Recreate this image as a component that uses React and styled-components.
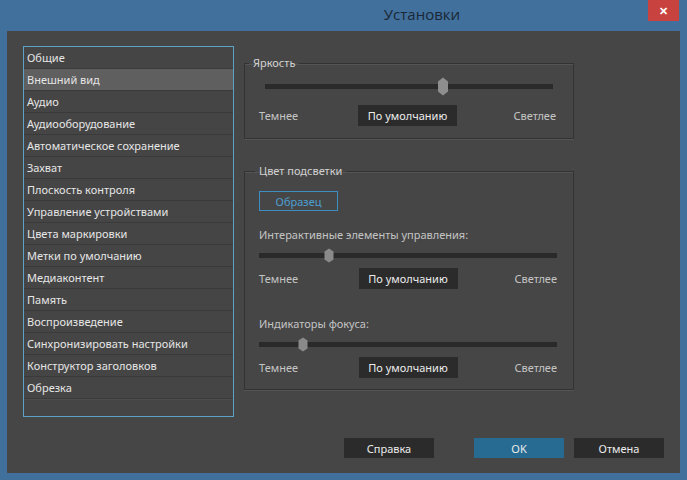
import React from 'react';
import styled, { createGlobalStyle } from 'styled-components';

const GlobalStyle = createGlobalStyle`
  html, body {
    margin: 0;
    padding: 0;
    background: #41709c;
  }
  body {
    font-family: "Noto Sans", "Open Sans", sans-serif;
    font-size: 11px;
  }
`;

const menuItems = [
  'Общие',
  'Внешний вид',
  'Аудио',
  'Аудиооборудование',
  'Автоматическое сохранение',
  'Захват',
  'Плоскость контроля',
  'Управление устройствами',
  'Цвета маркировки',
  'Метки по умолчанию',
  'Медиаконтент',
  'Память',
  'Воспроизведение',
  'Синхронизировать настройки',
  'Конструктор заголовков',
  'Обрезка',
];

const Slider = ({ value, big }) => (
  <SliderBox $big={big}>
    <Track />
    <ThumbWrap style={{ left: `${value}%` }} $big={big}>
      {big ? (
        <svg width="11" height="19" viewBox="0 0 11 19">
          <polygon points="5.5,0.5 10.5,4.5 10.5,14.5 5.5,18.5 0.5,14.5 0.5,4.5" fill="#8e8e8e" />
        </svg>
      ) : (
        <svg width="10" height="15" viewBox="0 0 10 15">
          <polygon points="5,0.5 9.5,3.5 9.5,11.5 5,14.5 0.5,11.5 0.5,3.5" fill="#8a8a8a" />
        </svg>
      )}
    </ThumbWrap>
  </SliderBox>
);

const LevelRow = () => (
  <Levels>
    <Hint>Темнее</Hint>
    <DarkButton>По умолчанию</DarkButton>
    <Hint $right>Светлее</Hint>
  </Levels>
);

export default function App() {
  return (
    <>
      <GlobalStyle />
      <Window>
        <TitleBar>
          <Title>Установки</Title>
          <CloseButton>✕</CloseButton>
        </TitleBar>
        <Body>
          <Main>
            <List>
              {menuItems.map((item, idx) => (
                <Row key={idx} $active={idx === 1}>{item}</Row>
              ))}
              <EmptyRow />
            </List>
            <Panel>
              <Group>
                <Legend $offset={-10}>Яркость</Legend>
                <BrightSlider>
                  <Slider value={61.8} big />
                </BrightSlider>
                <BrightLevels>
                  <LevelRow />
                </BrightLevels>
              </Group>
              <Group $second>
                <Legend $offset={-4}>Цвет подсветки</Legend>
                <SampleButton>Образец</SampleButton>
                <Caption>Интерактивные элементы управления:</Caption>
                <Slider value={23.4} />
                <LevelRow />
                <Caption $spaced>Индикаторы фокуса:</Caption>
                <Slider value={14.7} />
                <LevelRow />
              </Group>
            </Panel>
          </Main>
          <Footer>
            <FooterButton>Справка</FooterButton>
            <FooterButton $primary>OK</FooterButton>
            <FooterButton>Отмена</FooterButton>
          </Footer>
        </Body>
      </Window>
    </>
  );
}

const Window = styled.div`
  width: 687px;
  height: 480px;
  display: flex;
  flex-direction: column;
  background: #41709c;
  box-sizing: border-box;
`;

const TitleBar = styled.div`
  height: 31px;
  display: flex;
  justify-content: center;
  align-items: flex-start;
  padding-left: 157px;
  position: relative;
`;

const Title = styled.div`
  font-family: "Open Sans", "Noto Sans", sans-serif;
  font-size: 15px;
  color: #1a2736;
  line-height: 16px;
  padding-top: 6px;
`;

const CloseButton = styled.div`
  position: absolute;
  top: 0;
  right: 8px;
  width: 31px;
  height: 21px;
  background: #c8433f;
  color: #fff;
  font-size: 11px;
  font-weight: bold;
  display: flex;
  align-items: center;
  justify-content: center;
`;

const Body = styled.div`
  flex: 1;
  margin: 0 7px 7px 7px;
  background: #464646;
  padding: 15px 16px 15px 16px;
  display: flex;
  flex-direction: column;
`;

const Main = styled.div`
  display: flex;
  align-items: flex-start;
  gap: 10px;
`;

const List = styled.div`
  width: 211px;
  height: 371px;
  box-sizing: border-box;
  border: 1px solid #5ca1c6;
  background: #454545;
  display: flex;
  flex-direction: column;
`;

const Row = styled.div`
  height: 22px;
  box-sizing: border-box;
  border-bottom: 1px solid #3a3a3a;
  padding-left: 3px;
  line-height: 21px;
  color: #e6e6e6;
  background: ${p => (p.$active ? '#5f5f5f' : 'transparent')};
  white-space: nowrap;
`;

const EmptyRow = styled.div`
  flex: 1;
  border-top: 1px solid #4e4e4e;
`;

const Panel = styled.div`
  width: 330px;
  margin-top: 9px;
  display: flex;
  flex-direction: column;
  gap: 24px;
`;

const Group = styled.fieldset`
  margin: 0;
  padding: ${p => (p.$second ? '12px 16px 11px 14px' : '6px 17px 12px 14px')};
  border: 1px solid #333333;
  box-shadow: 0 1px 0 #545454, inset 0 1px 0 #545454;
  min-width: 0;
  display: flex;
  flex-direction: column;
  align-items: stretch;
`;

const Legend = styled.legend`
  margin-left: ${p => p.$offset}px;
  padding: 0 4px;
  line-height: 16px;
  color: #d2d2d2;
`;

const BrightSlider = styled.div`
  padding: 0 3px 0 6px;
`;

const BrightLevels = styled.div`
  margin-top: 9px;
`;

const SliderBox = styled.div`
  position: relative;
  height: ${p => (p.$big ? 19 : 17)}px;
  margin: ${p => (p.$big ? '0' : '4px 0')};
  display: flex;
  align-items: center;
`;

const Track = styled.div`
  flex: 1;
  height: 5px;
  background: #2a2a2a;
`;

const ThumbWrap = styled.div`
  position: absolute;
  top: ${p => (p.$big ? 0 : 1)}px;
  transform: translateX(-50%);
  display: flex;
  svg {
    display: block;
  }
`;

const Levels = styled.div`
  display: grid;
  grid-template-columns: 1fr auto 1fr;
  align-items: center;
`;

const Hint = styled.span`
  color: #c4c4c4;
  justify-self: ${p => (p.$right ? 'end' : 'start')};
`;

const DarkButton = styled.div`
  width: 99px;
  height: 21px;
  background: #2b2b2b;
  color: #ececec;
  display: flex;
  align-items: center;
  justify-content: center;
`;

const SampleButton = styled.div`
  width: 79px;
  height: 20px;
  box-sizing: border-box;
  border: 1px solid #3b8dc2;
  color: #4c9fd2;
  display: flex;
  align-items: center;
  justify-content: center;
`;

const Caption = styled.div`
  margin-top: ${p => (p.$spaced ? 27 : 16)}px;
  line-height: 16px;
  color: #c4c4c4;
`;

const Footer = styled.div`
  margin-top: auto;
  display: flex;
  justify-content: flex-end;
  gap: 10px;
`;

const FooterButton = styled.div`
  width: 90px;
  height: 20px;
  background: ${p => (p.$primary ? '#276b93' : '#2b2b2b')};
  color: #ececec;
  display: flex;
  align-items: center;
  justify-content: center;
  margin-left: ${p => (p.$primary ? '30px' : '0')};
`;
